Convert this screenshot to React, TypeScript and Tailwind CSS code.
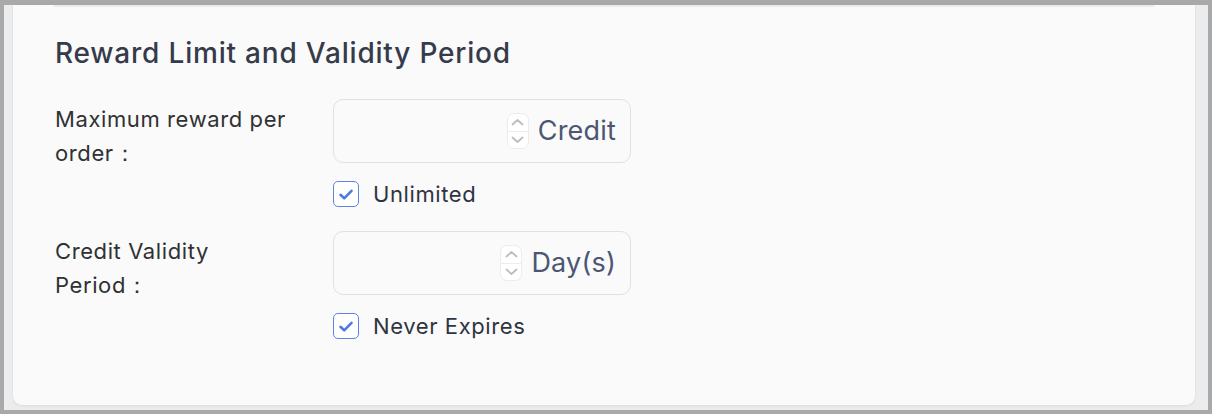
import React from "react";

function Spinner() {
  return (
    <div className="flex h-[36px] w-[22px] flex-col overflow-hidden rounded-[7px] border border-[#ececec] bg-white">
      <div className="flex flex-1 items-center justify-center border-b border-[#ececec]">
        <svg width="13" height="8" viewBox="0 0 13 8" fill="none">
          <path d="M1.5 6.5 L6.5 2 L11.5 6.5" stroke="#bdbdbd" strokeWidth="1.8" strokeLinecap="round" strokeLinejoin="round" />
        </svg>
      </div>
      <div className="flex flex-1 items-center justify-center">
        <svg width="13" height="8" viewBox="0 0 13 8" fill="none">
          <path d="M1.5 1.5 L6.5 6 L11.5 1.5" stroke="#bdbdbd" strokeWidth="1.8" strokeLinecap="round" strokeLinejoin="round" />
        </svg>
      </div>
    </div>
  );
}

function Check({ label }: { label: string }) {
  return (
    <div className="flex items-center gap-[14px]">
      <div className="flex h-[26px] w-[26px] items-center justify-center rounded-[5px] border-[1.5px] border-[#5f84e6] bg-white">
        <svg width="16" height="13" viewBox="0 0 16 13" fill="none">
          <path d="M2.5 6.8 L6.2 10.3 L13.5 2.8" stroke="#4f79e3" strokeWidth="2.6" strokeLinecap="round" strokeLinejoin="round" />
        </svg>
      </div>
      <span className="text-[22px] leading-[26px] tracking-[0.6px] text-[#2f3441]">{label}</span>
    </div>
  );
}

function Row({ label1, label2, unit, check }: { label1: string; label2: string; unit: string; check: string }) {
  return (
    <div className="flex">
      <div className="w-[278px] pt-[3px] text-[22px] leading-[34px] tracking-[0.6px] text-[#303133]">
        <div>{label1}</div>
        <div>{label2}</div>
      </div>
      <div className="flex flex-col gap-[18px]">
        <div className="flex h-[64px] w-[298px] items-center justify-end gap-[9px] rounded-[10px] border border-[#dde1ea] bg-[#fafafa] pr-[14px]">
          <Spinner />
          <span className="text-[27px] tracking-[0.2px] text-[#4c5672]">{unit}</span>
        </div>
        <Check label={check} />
      </div>
    </div>
  );
}

export default function App() {
  return (
    <div
      className="h-[414px] w-[1212px] bg-[#a9a9a9] pb-[4px] pl-[4px] pr-[4px] pt-[5px]"
      style={{ fontFamily: "Inter, 'Noto Sans', sans-serif" }}
    >
      <div className="h-[405px] bg-[#ebecee] pl-[9px] pr-[13px] pb-[5px]">
        <div className="h-[400px] rounded-b-[9px] bg-[#fafafa] shadow-[0_1px_3px_rgba(0,0,0,0.08)]">
          <div className="mx-[41px] h-[2px] bg-[#e8ebf0]" />
          <div className="pl-[42px] pt-[28px]">
            <h2 className="text-[28px] font-medium leading-[36px] tracking-[0.8px] text-[#353b4b]">
              Reward Limit and Validity Period
            </h2>
            <div className="mt-[28px] flex flex-col gap-[24px]">
              <Row label1="Maximum reward per" label2="order：" unit="Credit" check="Unlimited" />
              <Row label1="Credit Validity" label2="Period：" unit="Day(s)" check="Never Expires" />
            </div>
          </div>
        </div>
      </div>
    </div>
  );
}
